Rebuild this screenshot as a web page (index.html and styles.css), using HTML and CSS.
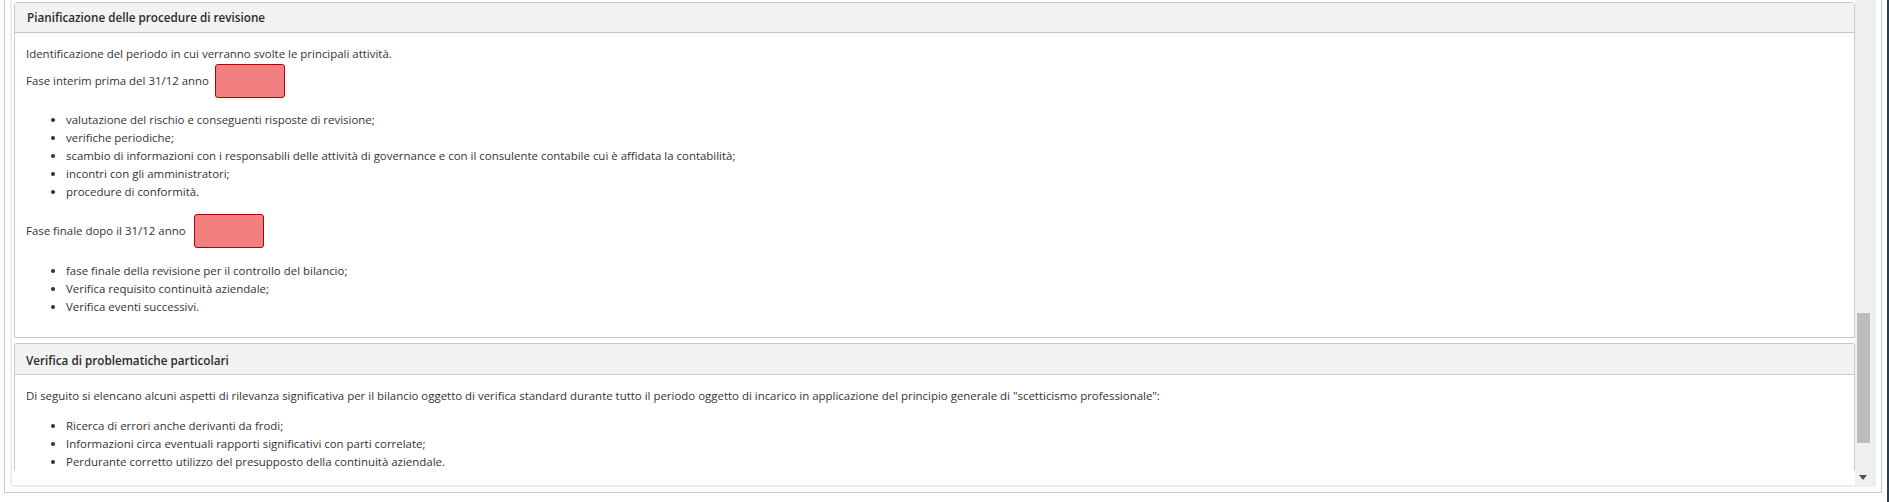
FILE: index.html
```html
<!DOCTYPE html>
<html lang="it">
<head>
<meta charset="utf-8">
<title>Pianificazione</title>
<link rel="stylesheet" href="styles.css">
</head>
<body>
<div class="page">
  <div class="outer">
    <div class="inner">
      <div class="content">
        <section class="panel first">
          <div class="panel-head">Pianificazione delle procedure di revisione</div>
          <div class="panel-body b1">
            <p class="line intro">Identificazione del periodo in cui verranno svolte le principali attività.</p>
            <div class="field-row"><span>Fase interim prima del 31/12 anno</span><span class="field"></span></div>
            <ul class="list">
              <li>valutazione del rischio e conseguenti risposte di revisione;</li>
              <li>verifiche periodiche;</li>
              <li>scambio di informazioni con i responsabili delle attività di governance e con il consulente contabile cui è affidata la contabilità;</li>
              <li>incontri con gli amministratori;</li>
              <li>procedure di conformità.</li>
            </ul>
            <div class="field-row second"><span>Fase finale dopo il 31/12 anno</span><span class="field"></span></div>
            <ul class="list after-second">
              <li>fase finale della revisione per il controllo del bilancio;</li>
              <li>Verifica requisito continuità aziendale;</li>
              <li>Verifica eventi successivi.</li>
            </ul>
          </div>
        </section>
        <section class="panel last">
          <div class="panel-head tall">Verifica di problematiche particolari</div>
          <div class="panel-body b2">
            <p class="line lead">Di seguito si elencano alcuni aspetti di rilevanza significativa per il bilancio oggetto di verifica standard durante tutto il periodo oggetto di incarico in applicazione del principio generale di "scetticismo professionale":</p>
            <ul class="list">
              <li>Ricerca di errori anche derivanti da frodi;</li>
              <li>Informazioni circa eventuali rapporti significativi con parti correlate;</li>
              <li>Perdurante corretto utilizzo del presupposto della continuità aziendale.</li>
            </ul>
          </div>
        </section>
      </div>
      <div class="scrollbar">
        <div class="thumb"></div>
        <svg class="arrow" width="8" height="5" viewBox="0 0 8 5"><path d="M0 0H8L4 5Z" fill="#505050"/></svg>
      </div>
    </div>
  </div>
  <div class="edge"></div>
</div>
</body>
</html>
```
FILE: styles.css
```css
html, body { margin: 0; padding: 0; background: #fff; }
body {
  width: 1889px;
  height: 502px;
  overflow: hidden;
  font-family: "Open Sans", "Noto Sans", sans-serif;
  font-size: 11.44px;
  line-height: 18px;
  color: #333;
}
.page { display: flex; height: 502px; padding-left: 4px; box-sizing: border-box; }
.outer {
  width: 1878px;
  height: 493px;
  box-sizing: border-box;
  border: 1px solid #c8c8c8;
  border-top: 0;
  padding: 0 5px 5px;
}
.inner {
  display: flex;
  height: 100%;
  box-sizing: border-box;
  border: 2px solid #e8eef3;
  border-top: 0;
  border-right-width: 4px;
  border-radius: 0 0 3px 3px;
}
.content {
  flex: 1;
  min-width: 0;
  padding: 2px 0 0 2px;
  box-sizing: border-box;
  overflow: hidden;
}
.panel {
  border: 1px solid #c8c8c8;
  border-radius: 3px 3px 0 0;
  background: #fff;
}
.panel.last { margin-top: 5px; border-bottom: 0; }
.panel.first { height: 336px; box-sizing: border-box; }
.panel-head {
  height: 29px;
  padding: 0 12px;
  background: #f2f2f2;
  border-bottom: 1px solid #c8c8c8;
  font-weight: 600;
  font-size: 11.7px;
  line-height: 29px;
  color: #2b2b2b;
}
.panel-head.tall { height: 29px; padding-top: 1px; line-height: 30px; padding-left: 11px; }
.panel-body { padding: 12px 11px 0; }
.line { margin: 0; }
.field-row { display: flex; align-items: center; gap: 6px; margin-top: 1px; }
.field-row.second { margin-top: 13px; gap: 8px; }
.field {
  width: 70px;
  height: 34px;
  box-sizing: border-box;
  background: #f28080;
  border: 1px solid #b30000;
  border-radius: 3px;
}
.list { margin: 13px 0 0; padding: 0 0 0 40px; }
.list.after-second { margin-top: 14px; }
.b2 .list { margin-top: 12px; }
.scrollbar {
  width: 17px;
  background: #f0f0f0;
  position: relative;
  flex: none;
}
.thumb {
  position: absolute;
  left: 2px;
  top: 313px;
  width: 13px;
  height: 130px;
  background: #bdbdbd;
}
.arrow { position: absolute; left: 4px; top: 475px; }
.edge { width: 2px; height: 100%; margin-left: 5px; background: #2b3f4f; }
```
